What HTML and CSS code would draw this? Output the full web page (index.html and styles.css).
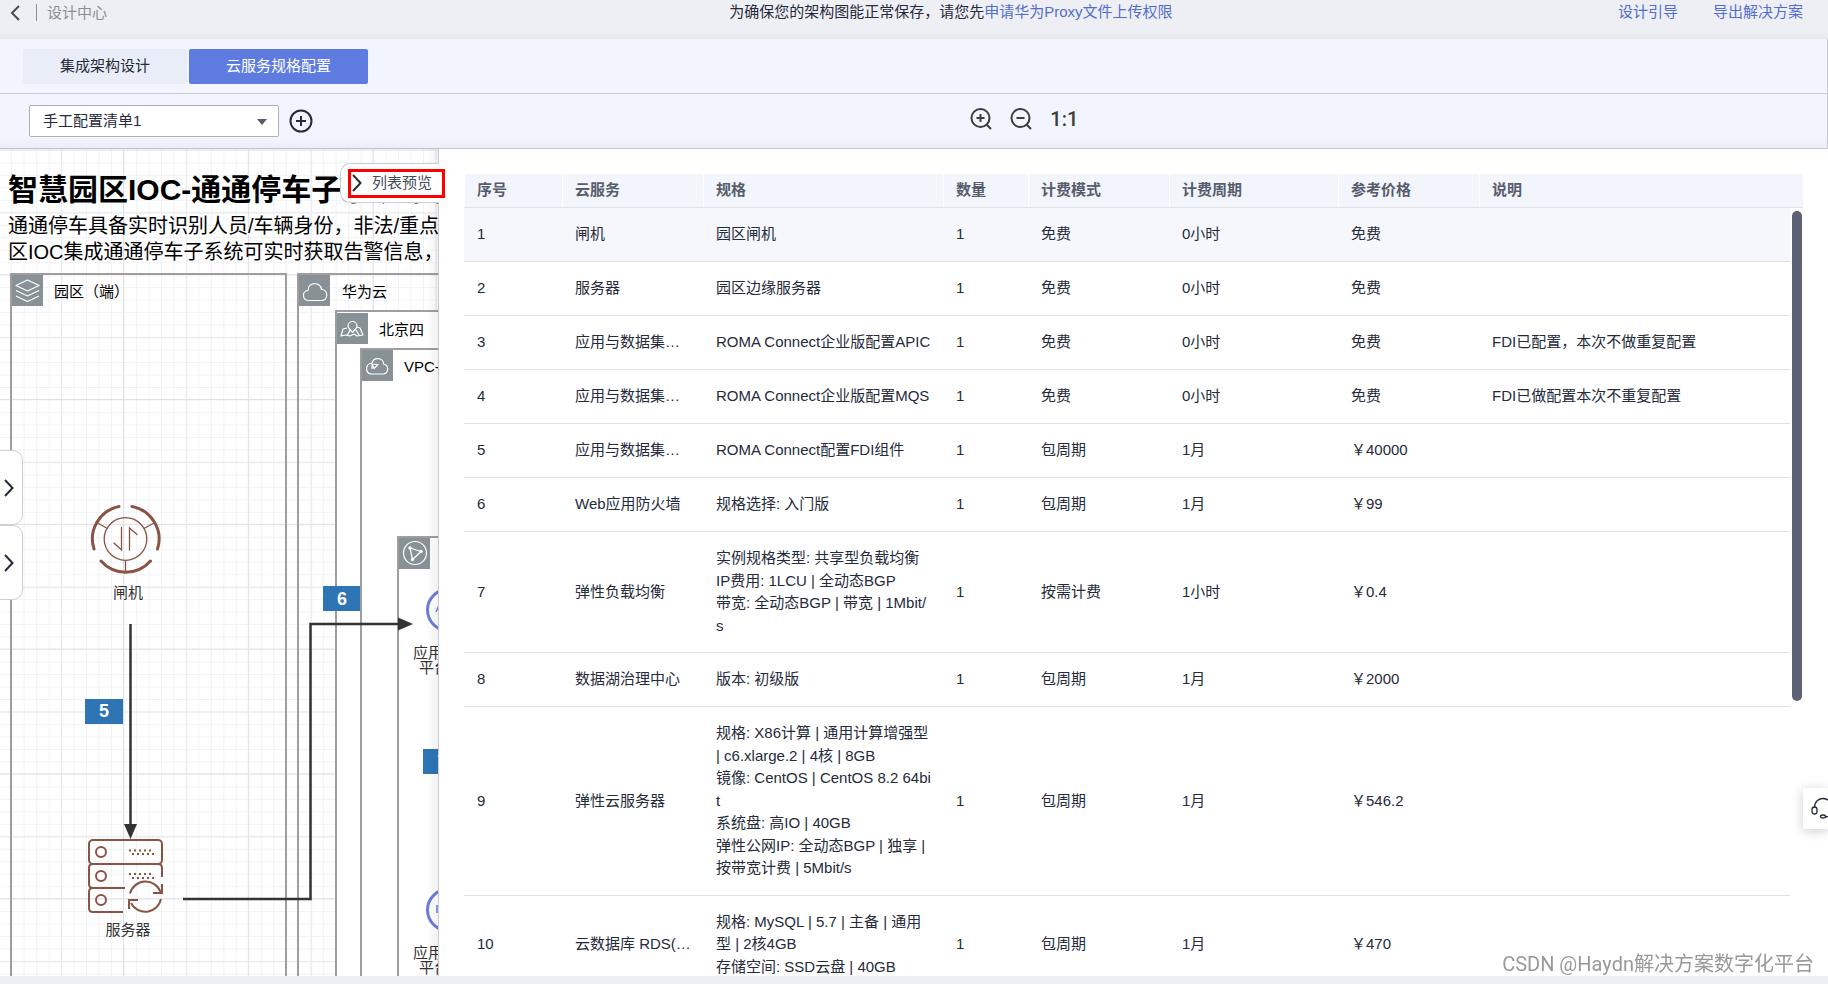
FILE: index.html
```html
<!DOCTYPE html>
<html lang="zh-CN">
<head>
<meta charset="utf-8">
<title>设计中心 - 云服务规格配置</title>
<link rel="stylesheet" href="styles.css">
</head>
<body>
<header class="topbar">
  <div class="crumb">
    <button class="icon-btn back" type="button" aria-label="返回">
      <svg width="10" height="16" viewBox="0 0 10 16"><path d="M9 1 2 8l7 7" fill="none" stroke="#464c59" stroke-width="2"/></svg>
    </button>
    <span class="crumb-title">设计中心</span>
  </div>
  <p class="notice">为确保您的架构图能正常保存，请您先<a href="#">申请华为Proxy文件上传权限</a></p>
  <nav class="top-links"><a href="#">设计引导</a><a href="#">导出解决方案</a></nav>
</header>

<nav class="tabs">
  <button class="tab" type="button">集成架构设计</button>
  <button class="tab active" type="button">云服务规格配置</button>
</nav>

<div class="toolbar">
  <div class="plan">
    <div class="select-box">
      <select class="select" aria-label="配置清单"><option>手工配置清单1</option></select>
      <svg class="caret" width="10" height="6" viewBox="0 0 10 6"><path d="M0 0h10L5 6z" fill="#575d6c"/></svg>
    </div>
    <button class="icon-btn" type="button" aria-label="新增清单">
      <svg width="24" height="24" viewBox="0 0 24 24" fill="none" stroke="#252b3a" stroke-width="2"><circle cx="12" cy="12" r="10.5"/><path d="M12 7v10M7 12h10"/></svg>
    </button>
  </div>
  <div class="zoom">
    <button class="icon-btn" type="button" aria-label="放大">
      <svg width="22" height="24" viewBox="0 0 22 24" fill="none" stroke="#3d3d3d" stroke-width="2"><circle cx="10.500" cy="11" r="9"/><path d="M10.500 7v8M6.500 11h8M16 17l5 5"/></svg>
    </button>
    <button class="icon-btn" type="button" aria-label="缩小">
      <svg width="22" height="24" viewBox="0 0 22 24" fill="none" stroke="#3d3d3d" stroke-width="2"><circle cx="10.500" cy="11" r="9"/><path d="M6.500 11h8M16 17l5 5"/></svg>
    </button>
    <button class="icon-btn ratio" type="button">1:1</button>
  </div>
</div>

<main class="work">
  <section class="canvas">
    <svg class="diagram" width="438" height="827" viewBox="0 149 438 827">
      <defs>
        <pattern id="minor" x="123.5" y="399.5" width="12.48" height="12.48" patternUnits="userSpaceOnUse"><path d="M.5 0V12.480M0 .5H12.480" stroke="#f1f2f6" fill="none"/></pattern>
        <pattern id="mid" x="61" y="337" width="124.800" height="124.800" patternUnits="userSpaceOnUse"><path d="M.5 0V124.800M0 .5H124.800" stroke="#eaebef" fill="none" stroke-width="1.500"/></pattern>
        <pattern id="major" x="123" y="399" width="124.800" height="124.800" patternUnits="userSpaceOnUse"><path d="M.5 0V124.800M0 .5H124.800" stroke="#e0e1e7" fill="none"/></pattern>
      </defs>
      <rect x="0" y="149" width="438" height="827" fill="url(#minor)"/>
      <rect x="0" y="149" width="438" height="827" fill="url(#mid)"/>
      <rect x="0" y="149" width="438" height="827" fill="url(#major)"/>

      <text class="d-title" x="8" y="200">智慧园区IOC-通通停车子系统架构</text>
      <text class="d-desc" x="8" y="233">通通停车具备实时识别人员/车辆身份，非法/重点</text>
      <text class="d-desc" x="8" y="259">区IOC集成通通停车子系统可实时获取告警信息，</text>

      <g fill="none" stroke="#9e9e9e" stroke-width="2">
        <rect x="11" y="274" width="275" height="740"/>
        <rect x="298" y="274" width="400" height="740"/>
        <rect x="336" y="311" width="400" height="740" fill="#fff"/>
        <rect x="361" y="349" width="400" height="740" fill="#fff"/>
        <rect x="398" y="537" width="400" height="740" fill="#fff"/>
      </g>
      <g fill="#879196">
        <rect x="12" y="275" width="31" height="31"/>
        <rect x="299" y="275" width="31" height="31"/>
        <rect x="337" y="313" width="31" height="31"/>
        <rect x="362" y="350" width="31" height="31"/>
        <rect x="399" y="538" width="31" height="31"/>
      </g>
      <g fill="none" stroke="#fff" stroke-width="1.200" stroke-linejoin="round">
        <path d="M27.500 280 39 285.500 27.500 291 16 285.500zM16 290.500l11.500 5.500L39 290.500M16 296l11.500 5.500L39 296"/>
        <path d="M309 300.500c-7 0-7.500-9.500-1-10 0-9 13-9 13.500-1 7 0 7 11 0 11z"/>
        <path d="M357 326c0 2.500-2.500 3.500-4.500 6.500-2-3-4.500-4-4.500-6.500a4.500 4.500 0 0 1 9 0zM347 328l-4 1-2 7 5-1 4 1 4-2 3 2 6-1-3-7-3-1M350 330l-3 6M356 330l3 5"/>
        <path d="M371 374c-6-1-6-10 1-11 2-7 12-5 11.500 1 5.500 1 5.500 9 0 10zM372 364l6 .5-4 4-2-4.500v5"/>
        <circle cx="415" cy="553" r="11.500"/><path d="M410 548l11 3.500-8.500 8z"/>
      </g>
      <g fill="#fff"><circle cx="410" cy="548" r="1.700"/><circle cx="421" cy="551.500" r="1.700"/><circle cx="412.500" cy="559.500" r="1.700"/></g>
      <g class="d-zone">
        <text x="54" y="297">园区（端）</text>
        <text x="342" y="297">华为云</text>
        <text x="379" y="335">北京四</text>
        <text x="404" y="372">VPC-</text>
      </g>

      <g fill="none" stroke="#8a5444" stroke-linecap="round">
        <path d="M119 506.500A33 33 0 0 0 94 549M132 506.500A33 33 0 0 1 157.500 549M101 561A33 33 0 0 0 150.500 561" stroke-width="3"/>
        <circle cx="125.500" cy="539" r="21.300" stroke-width="1.300"/>
        <path d="M97.500 523l10 5.500M154 523l-10 5.500M125.500 560.500v10M121.500 527.500V550l-7.500-7M129.500 550V528l7.500 6.500" stroke-width="1.300"/>
      </g>

      <g fill="none" stroke="#8a5444" stroke-width="2">
        <rect x="89" y="840" width="73" height="24" rx="4"/>
        <path d="M162 877v-9q0-4-4-4H93q-4 0-4 4v16q0 4 4 4h32M93 888q-4 0-4 4v16q0 4 4 4h30"/>
        <circle cx="101" cy="852" r="5"/><circle cx="101" cy="876" r="5"/><circle cx="101" cy="900" r="5"/>
        <path d="M130 893.500A16 16 0 0 1 160.500 892M161 899A16 16 0 0 1 131 903M162 884v9h-9M129 909v-9h9"/>
        <path d="M129 850.500h24M129 874h24M132 854h24M132 878h24" stroke-dasharray="2 3"/>
      </g>
      <g class="d-node">
        <text x="128" y="598">闸机</text>
        <text x="128" y="935">服务器</text>
        <text x="443" y="658">应用集成</text>
        <text x="434" y="673">平台</text>
        <text x="443" y="958">应用集成</text>
        <text x="434" y="973">平台</text>
      </g>

      <path d="M130.500 624V828M183 899H310.500V624H400" fill="none" stroke="#333" stroke-width="2.500"/>
      <path d="M124 824h13l-6.500 15zM398 617.500v13l15-6.500z" fill="#333"/>
      <g fill="#2e75b6">
        <rect x="85" y="699" width="38" height="25"/>
        <rect x="323" y="586" width="37" height="25"/>
        <rect x="423" y="749" width="37" height="25"/>
      </g>
      <g class="d-step">
        <text x="104" y="717">5</text>
        <text x="342" y="605">6</text>
        <text x="442" y="768">7</text>
      </g>
      <g fill="#fff" stroke="#6b7bdf" stroke-width="3">
        <circle cx="448" cy="610" r="20.500"/><circle cx="448" cy="910" r="20.500"/>
        <path d="M436 612l4-9M437 913v-8" stroke-width="1.500"/>
      </g>
    </svg>
    <button class="handle handle-a" type="button" aria-label="展开侧栏">
      <svg width="10" height="18" viewBox="0 0 10 18"><path d="M1 1l7.500 8L1 17" fill="none" stroke="#252b3a" stroke-width="2"/></svg>
    </button>
    <button class="handle handle-b" type="button" aria-label="展开属性">
      <svg width="10" height="18" viewBox="0 0 10 18"><path d="M1 1l7.500 8L1 17" fill="none" stroke="#252b3a" stroke-width="2"/></svg>
    </button>
  </section>

  <section class="panel">
    <button class="preview" type="button">
      <span class="preview-mark">
        <svg width="10" height="18" viewBox="0 0 10 18"><path d="M1 1l7.500 8L1 17" fill="none" stroke="#252b3a" stroke-width="2"/></svg>
        列表预览
      </span>
    </button>
    <div class="table-wrap">
      <table class="specs">
        <colgroup><col class="c-no"><col class="c-mid"><col class="c-spec"><col class="c-qty"><col class="c-mid"><col class="c-cycle"><col class="c-mid"><col></colgroup>
        <thead><tr><th>序号</th><th>云服务</th><th>规格</th><th>数量</th><th>计费模式</th><th>计费周期</th><th>参考价格</th><th>说明</th></tr></thead>
        <tbody>
          <tr class="hover"><td>1</td><td class="name">闸机</td><td>园区闸机</td><td>1</td><td>免费</td><td>0小时</td><td>免费</td><td></td></tr>
          <tr><td>2</td><td class="name">服务器</td><td>园区边缘服务器</td><td>1</td><td>免费</td><td>0小时</td><td>免费</td><td></td></tr>
          <tr><td>3</td><td class="name">应用与数据集成平台</td><td>ROMA Connect企业版配置APIC</td><td>1</td><td>免费</td><td>0小时</td><td>免费</td><td>FDI已配置，本次不做重复配置</td></tr>
          <tr><td>4</td><td class="name">应用与数据集成平台</td><td>ROMA Connect企业版配置MQS</td><td>1</td><td>免费</td><td>0小时</td><td>免费</td><td>FDI已做配置本次不重复配置</td></tr>
          <tr><td>5</td><td class="name">应用与数据集成平台</td><td>ROMA Connect配置FDI组件</td><td>1</td><td>包周期</td><td>1月</td><td>￥40000</td><td></td></tr>
          <tr><td>6</td><td class="name">Web应用防火墙</td><td>规格选择: 入门版</td><td>1</td><td>包周期</td><td>1月</td><td>￥99</td><td></td></tr>
          <tr><td>7</td><td class="name">弹性负载均衡</td><td>实例规格类型: 共享型负载均衡<br>IP费用: 1LCU | 全动态BGP<br>带宽: 全动态BGP | 带宽 | 1Mbit/s</td><td>1</td><td>按需计费</td><td>1小时</td><td>￥0.4</td><td></td></tr>
          <tr><td>8</td><td class="name">数据湖治理中心</td><td>版本: 初级版</td><td>1</td><td>包周期</td><td>1月</td><td>￥2000</td><td></td></tr>
          <tr><td>9</td><td class="name">弹性云服务器</td><td>规格: X86计算 | 通用计算增强型 | c6.xlarge.2 | 4核 | 8GB<br>镜像: CentOS | CentOS 8.2 64bit<br>系统盘: 高IO | 40GB<br>弹性公网IP: 全动态BGP | 独享 | 按带宽计费 | 5Mbit/s</td><td>1</td><td>包周期</td><td>1月</td><td>￥546.2</td><td></td></tr>
          <tr><td>10</td><td class="name">云数据库 RDS(MySQL)</td><td>规格: MySQL | 5.7 | 主备 | 通用型 | 2核4GB<br>存储空间: SSD云盘 | 40GB</td><td>1</td><td>包周期</td><td>1月</td><td>￥470</td><td></td></tr>
        </tbody>
      </table>
      <div class="track"><div class="thumb"></div></div>
    </div>
  </section>
</main>

<button class="support" type="button" aria-label="在线客服">
  <svg width="24" height="24" viewBox="0 0 24 24" fill="none" stroke="#252b3a" stroke-width="1.300"><path d="M3.500 10.500C3.500-1.500 20.500-1.500 20.500 10.500M20 17c-1 2-3 3-6 3"/><rect x="1" y="10" width="5" height="7" rx="2.500"/><rect x="18" y="10" width="5" height="7" rx="2.500"/><ellipse cx="12" cy="19.500" rx="2.500" ry="1.500"/></svg>
</button>
<div class="watermark">CSDN @Haydn解决方案数字化平台</div>
</body>
</html>
```

FILE: styles.css
```css
* { box-sizing: border-box; }

body {
  margin: 0;
  height: 100vh;
  padding-bottom: 8px;
  display: flex;
  flex-direction: column;
  overflow: hidden;
  background: #edeff4;
  color: #252b3a;
  font: 15px/1.5 "Liberation Sans", "Noto Sans CJK SC", sans-serif;
}

button, select { font: inherit; color: inherit; }
a { color: #526ecc; text-decoration: none; }
svg { display: block; }

.icon-btn {
  display: flex;
  padding: 0;
  border: 0;
  background: none;
  cursor: pointer;
}

/* Top bar */
.topbar {
  flex: none;
  height: 39px;
  display: grid;
  grid-template-columns: 40% 1fr auto;
  padding: 0 25px 14px 0;
  align-items: center;
  background: linear-gradient(#eeeff4 80%, #e6e7ec);
}
.crumb { display: flex; align-items: center; padding-left: 10px; }
.crumb-title {
  margin-left: 16px;
  padding-left: 10px;
  border-left: 1px solid #8a8e99;
  line-height: 17px;
  color: #8a8e99;
}
.notice { margin: 0; padding-left: 8px; white-space: nowrap; }
.top-links { display: flex; gap: 35px; }

/* Tabs */
.tabs {
  flex: none;
  height: 55px;
  display: flex;
  align-items: center;
  gap: 2px;
  padding-left: 23px;
  background: #f2f5fd;
  border-bottom: 1px solid #c9cbd0;
  border-right: 1px solid #c9cbd0;
}
.tab {
  height: 35px;
  padding: 1px 37px 0;
  border: 0;
  border-radius: 2px;
  background: #e9edf8;
}
.tab.active { background: #5e7ce0; color: #fff; }

/* Toolbar */
.toolbar {
  flex: none;
  height: 55px;
  display: grid;
  grid-template-columns: 53% 1fr;
  align-items: center;
  background: linear-gradient(#f2f5fd 80%, #ebeef6);
  border-bottom: 1px solid #c4c6ca;
  border-right: 1px solid #c9cbd0;
}
.plan { display: flex; align-items: center; gap: 10px; padding-left: 29px; }
.select-box { position: relative; }
.select {
  display: block;
  width: 250px;
  height: 32px;
  padding: 1px 13px 0;
  appearance: none;
  border: 1px solid #adb0b8;
  border-radius: 2px;
  background: #fff;
}
.caret { position: absolute; right: 12px; top: 14px; pointer-events: none; }
.zoom { display: flex; align-items: center; gap: 18px; padding: 0 0 4px 2px; }
.ratio { font: 500 20px/24px Roboto, sans-serif; color: #3d3d3d; }

/* Work area */
.work { flex: 1; min-height: 0; display: flex; background: #fff; }
.canvas { position: relative; flex: none; overflow: hidden; }
.canvas::after {
  content: "";
  position: absolute;
  inset: 0 0 0 auto;
  width: 12px;
  background: linear-gradient(90deg, rgba(0, 0, 0, 0), rgba(0, 0, 0, .05));
}
.d-title { font-size: 30px; font-weight: bold; fill: #000; }
.d-desc { font-size: 20px; fill: #000; }
.d-zone { font-size: 15px; fill: #000; }
.d-node { font-size: 15px; fill: #333; text-anchor: middle; }
.d-step { font-size: 18px; font-weight: bold; fill: #fff; text-anchor: middle; }

.handle {
  position: absolute;
  left: -1px;
  width: 24px;
  height: 75px;
  padding: 0 0 0 4px;
  border: 1px solid #cfcfcf;
  border-radius: 0 10px 10px 0;
  background: #fff;
}
.handle-a { top: 301px; }
.handle-b { top: 376px; }

/* List panel */
.panel {
  position: relative;
  flex: 1;
  min-width: 0;
  display: flex;
  flex-direction: column;
  padding: 25px 25px 0;
  border-left: 1px solid #c9cbd0;
}
.preview {
  position: absolute;
  left: -99px;
  top: 14px;
  height: 40px;
  padding: 0 0 0 7px;
  border: 1px solid #cfcfcf;
  border-right: 0;
  border-radius: 10px 0 0 10px;
  background: #fff;
  width: 99px;
}
.preview-mark {
  display: flex;
  align-items: center;
  gap: 10px;
  width: 97px;
  height: 29px;
  padding-left: 1px;
  border: 3px solid #f00;
  white-space: nowrap;
  color: #464c59;
}

.table-wrap { position: relative; flex: 1; min-height: 0; overflow: hidden; }
.specs { width: 100%; table-layout: fixed; border-collapse: separate; border-spacing: 0; }
.c-no { width: 98px; }
.c-mid { width: 141px; }
.c-spec { width: 240px; }
.c-qty { width: 85px; }
.c-cycle { width: 169px; }
.specs th {
  height: 34px;
  padding: 0 12px 0 13px;
  text-align: left;
  background: #f2f5fc;
  color: #575d6c;
  border-bottom: 1px solid #dfe1e6;
  box-shadow: inset 1px 0 #fff;
}
.specs td {
  height: 54px;
  padding: 15px 12px 15px 13px;
  border-bottom: 1px solid #dfe1e6;
  word-break: break-all;
}
.specs .name { overflow: hidden; text-overflow: ellipsis; white-space: nowrap; }
.hover td { background: #f5f7fc; }

.track {
  position: absolute;
  inset: 34px 0 0 auto;
  width: 13px;
  padding: 3px 1px 0 2px;
  background: #fff;
}
.thumb { height: 64%; border-radius: 5px; background: #5c6173; }

/* Floating items */
.support {
  position: fixed;
  right: 0;
  top: 788px;
  width: 25px;
  height: 41px;
  padding: 0 0 0 8px;
  border: 0;
  overflow: hidden;
  background: #fff;
  box-shadow: 0 2px 12px rgba(0, 0, 0, .2);
}
.watermark {
  position: fixed;
  right: 14px;
  bottom: 5px;
  font: 20px/30px Roboto, "Noto Sans CJK SC", sans-serif;
  color: #999;
}
```
